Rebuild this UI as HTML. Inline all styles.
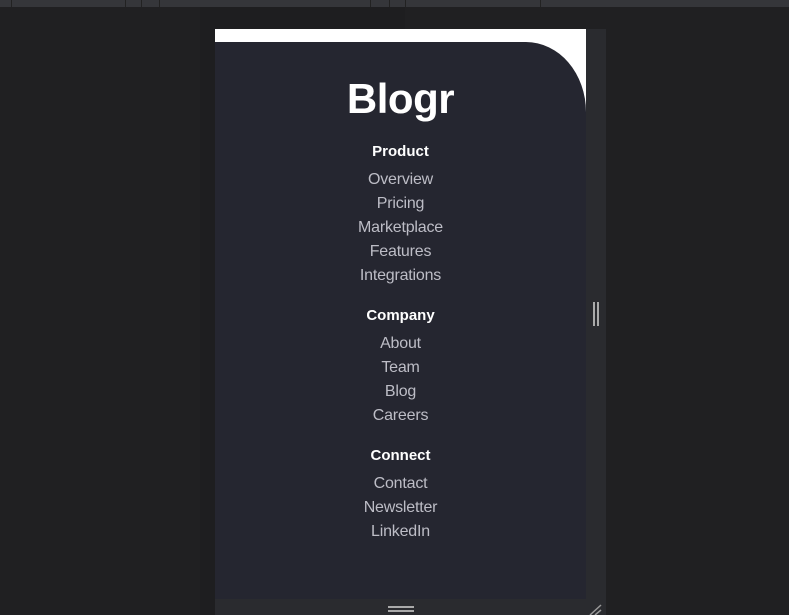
<!DOCTYPE html>
<html><head><meta charset="utf-8"><style>
*{margin:0;padding:0;box-sizing:border-box}
body{width:789px;height:615px;background:#202022;position:relative;overflow:hidden;font-family:"Liberation Sans",sans-serif}
.top{position:absolute;left:0;top:0;width:789px;height:7px;background:#35363a}
.top i{position:absolute;top:0;width:1px;height:7px;background:#222}
.outer{position:absolute;left:200px;top:7px;width:205px;height:608px;background:#1e1e20}
.frame{position:absolute;left:215px;top:29px;width:371px;height:570px;background:#fff}
.dark{position:absolute;left:215px;top:42px;width:371px;height:557px;background:#252630;border-top-right-radius:60px 70px}
.rside{position:absolute;left:586px;top:29px;width:20px;height:586px;background:#2a2b2f}
.bot{position:absolute;left:215px;top:599px;width:391px;height:16px;background:#2a2b2f}
.content{position:absolute;left:215px;top:42px;width:371px;text-align:center}
h1{font-size:42px;color:#fff;font-weight:bold;margin-top:33px;height:48px;line-height:48px;letter-spacing:-0.5px}
h2{font-size:15px;color:#fff;font-weight:bold;line-height:20px}
a{display:block;color:#bdbdc6;font-size:16px;line-height:24px;text-decoration:none;letter-spacing:-0.2px}
</style></head><body>
<div class="top"><i style="left:11px"></i><i style="left:125px"></i><i style="left:141px"></i><i style="left:159px"></i><i style="left:370px"></i><i style="left:389px"></i><i style="left:405px"></i><i style="left:540px"></i></div>
<div class="outer"></div>
<div class="frame"></div>
<div class="dark"></div>
<div class="rside"></div>
<div class="bot"></div>
<div style="position:absolute;left:593px;top:302px;width:2px;height:24px;background:#aaa"></div>
<div style="position:absolute;left:597px;top:302px;width:2px;height:24px;background:#aaa"></div>
<div style="position:absolute;left:388px;top:606px;width:26px;height:2px;background:#aaa"></div>
<div style="position:absolute;left:388px;top:610px;width:26px;height:2px;background:#aaa"></div>
<svg style="position:absolute;left:588px;top:603px" width="14" height="12"><path d="M2 12L13 2M7 12L13 7" stroke="#999" stroke-width="1.5"/></svg>
<div class="content">
<h1>Blogr</h1>
<div style="height:19px"></div>
<h2>Product</h2>
<div style="height:6px"></div>
<a>Overview</a><a>Pricing</a><a>Marketplace</a><a>Features</a><a>Integrations</a>
<div style="height:18px"></div>
<h2>Company</h2>
<div style="height:6px"></div>
<a>About</a><a>Team</a><a>Blog</a><a>Careers</a>
<div style="height:18px"></div>
<h2>Connect</h2>
<div style="height:6px"></div>
<a>Contact</a><a>Newsletter</a><a>LinkedIn</a>
</div>
</body></html>
